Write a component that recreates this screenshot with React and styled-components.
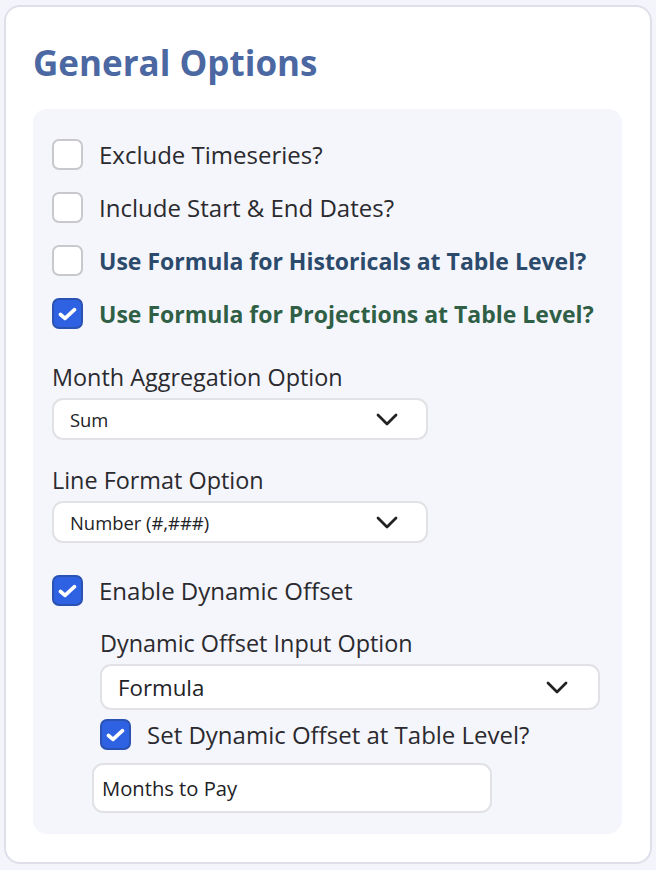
import styled, { createGlobalStyle } from 'styled-components';

const GlobalStyle = createGlobalStyle`
  body {
    margin: 0;
    background: #f4f5fa;
    font-family: "Open Sans", "Noto Sans", sans-serif;
  }
`;

const Page = styled.div`
  padding: 5px 4px 6px 4px;
`;

const Card = styled.div`
  background: #ffffff;
  border: 2px solid #dedfea;
  border-radius: 16px;
  padding: 36px 28px 26px 27px;
  height: 859px;
  box-sizing: border-box;
`;

const Title = styled.h2`
  margin: 0 0 26px 0;
  font-size: 35px;
  font-weight: 700;
  color: #4b68a2;
  line-height: 40px;
`;

const Panel = styled.div`
  background: #f5f6fb;
  border-radius: 14px;
  padding: 30px 19px 20px 19px;
  height: 725px;
  box-sizing: border-box;
  display: flex;
  flex-direction: column;
`;

const CheckRow = styled.label`
  display: flex;
  align-items: center;
  gap: ${(p) => p.$gap || 16}px;
  margin-bottom: ${(p) => p.$mb ?? 22}px;
  margin-left: ${(p) => p.$indent || 0}px;
`;

const Box = styled.span`
  width: ${(p) => p.$size || 31}px;
  height: ${(p) => p.$size || 31}px;
  box-sizing: border-box;
  border-radius: 7px;
  flex-shrink: 0;
  display: flex;
  align-items: center;
  justify-content: center;
  background: ${(p) => (p.$checked ? '#2f62e2' : '#ffffff')};
  border: 2px solid ${(p) => (p.$checked ? '#2a52b3' : '#c9c9cd')};
`;

const CheckText = styled.span`
  font-size: ${(p) => (p.$tone ? 23 : 24)}px;
  font-weight: ${(p) => (p.$tone ? 700 : 400)};
  color: ${(p) => (p.$tone === 'blue' ? '#2b4a6c' : p.$tone === 'green' ? '#2f5f45' : '#2a2a2f')};
  line-height: 26px;
  white-space: nowrap;
`;

const Field = styled.div`
  display: flex;
  flex-direction: column;
  margin-left: ${(p) => p.$indent || 0}px;
  margin-bottom: ${(p) => p.$mb || 0}px;
`;

const FieldLabel = styled.div`
  font-size: 23.4px;
  color: #2a2a2f;
  line-height: 26px;
  margin-bottom: 8px;
  white-space: nowrap;
`;

const Select = styled.div`
  width: ${(p) => p.$w}px;
  height: ${(p) => p.$h || 42}px;
  box-sizing: border-box;
  background: #ffffff;
  border: 2px solid #e1e1e6;
  border-radius: 11px;
  display: flex;
  align-items: center;
  justify-content: space-between;
  padding: 0 ${(p) => p.$pr || 28}px 0 ${(p) => p.$pl || 16}px;
  font-size: ${(p) => p.$fs || 18.4}px;
  color: #222226;
`;

const TextInput = styled.div`
  width: 400px;
  height: 50px;
  box-sizing: border-box;
  background: #ffffff;
  border: 2px solid #e1e1e6;
  border-radius: 11px;
  display: flex;
  align-items: center;
  padding-left: 8px;
  font-size: 20.2px;
  color: #222226;
  margin-left: 40px;
`;

const Check = () => (
  <svg width="19" height="14" viewBox="0 0 19 14" fill="none">
    <path d="M2.5 7.5 L7 11.3 L16.5 2.7" stroke="#fff" strokeWidth="3.6" strokeLinecap="round" strokeLinejoin="round" />
  </svg>
);

const Chevron = () => (
  <svg width="22" height="13" viewBox="0 0 22 13" fill="none">
    <path d="M2 2 L11 11 L20 2" stroke="#222" strokeWidth="2.8" strokeLinecap="round" strokeLinejoin="round" />
  </svg>
);

function Checkbox({ checked, size, tone, children, ...rest }) {
  return (
    <CheckRow {...rest}>
      <Box $checked={checked} $size={size}>{checked && <Check />}</Box>
      <CheckText $tone={tone}>{children}</CheckText>
    </CheckRow>
  );
}

export default function App() {
  return (
    <>
      <GlobalStyle />
      <Page>
        <Card>
          <Title>General Options</Title>
          <Panel>
            <Checkbox>Exclude Timeseries?</Checkbox>
            <Checkbox>Include Start &amp; End Dates?</Checkbox>
            <Checkbox tone="blue">Use Formula for Historicals at Table Level?</Checkbox>
            <Checkbox checked tone="green" $mb={35}>Use Formula for Projections at Table Level?</Checkbox>

            <Field $mb={27}>
              <FieldLabel>Month Aggregation Option</FieldLabel>
              <Select $w={376}>
                <span>Sum</span>
                <Chevron />
              </Select>
            </Field>

            <Field $mb={32}>
              <FieldLabel>Line Format Option</FieldLabel>
              <Select $w={376}>
                <span>Number (#,###)</span>
                <Chevron />
              </Select>
            </Field>

            <Checkbox checked $mb={24}>Enable Dynamic Offset</Checkbox>

            <Field $indent={48} $mb={9}>
              <FieldLabel>Dynamic Offset Input Option</FieldLabel>
              <Select $w={500} $h={46} $fs={22.3} $pl={16} $pr={30}>
                <span>Formula</span>
                <Chevron />
              </Select>
            </Field>

            <Checkbox checked $indent={48} $size={31} $mb={13}>Set Dynamic Offset at Table Level?</Checkbox>

            <TextInput>Months to Pay</TextInput>
          </Panel>
        </Card>
      </Page>
    </>
  );
}
